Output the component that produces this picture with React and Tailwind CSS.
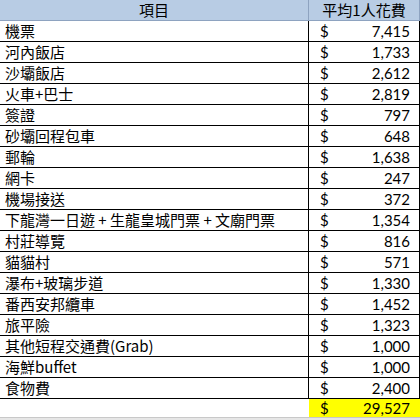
import React from "react";

const rows = [
  ["機票", "7,415"],
  ["河內飯店", "1,733"],
  ["沙壩飯店", "2,612"],
  ["火車+巴士", "2,819"],
  ["簽證", "797"],
  ["砂壩回程包車", "648"],
  ["郵輪", "1,638"],
  ["網卡", "247"],
  ["機場接送", "372"],
  ["下龍灣一日遊 + 生龍皇城門票 + 文廟門票", "1,354"],
  ["村莊導覽", "816"],
  ["貓貓村", "571"],
  ["瀑布+玻璃步道", "1,330"],
  ["番西安邦纜車", "1,452"],
  ["旅平險", "1,323"],
  ["其他短程交通費(Grab)", "1,000"],
  ["海鮮buffet", "1,000"],
  ["食物費", "2,400"],
];

export default function App() {
  return (
    <div className="w-[420px] h-[420px] bg-white overflow-hidden text-black">
      <div className="grid grid-cols-[309px_111px]">
        <div className="h-[21px] bg-[#b8cce4] border-b border-r border-[#8ea3c0] flex items-center justify-center text-[15px] leading-[20px] font-['Noto_Sans_CJK_TC','Noto_Sans',sans-serif]">
          項目
        </div>
        <div className="h-[21px] bg-[#b8cce4] border-b border-r border-[#8ea3c0] flex items-center justify-center text-[15px] leading-[20px] font-['Noto_Sans_CJK_TC','Noto_Sans',sans-serif]">
          平均1人花費
        </div>
        {rows.map(([name, value]) => (
          <React.Fragment key={name}>
            <div className="h-[21px] border-b border-r border-black flex items-center pl-[5px] text-[15px] leading-[20px] whitespace-nowrap font-['Noto_Sans_CJK_TC','Noto_Sans',sans-serif]">
              {name}
            </div>
            <div className="h-[21px] border-b border-r border-black flex items-center justify-between pl-[11px] pr-[9px] text-[15px] leading-[20px] font-['Lato','Liberation_Sans',sans-serif]">
              <span>$</span>
              <span>{value}</span>
            </div>
          </React.Fragment>
        ))}
        <div className="h-[19px] border-b border-[#c8c8c8] bg-white"></div>
        <div className="h-[19px] bg-[#ffff00] border-b border-[#c8c8c8] flex items-center justify-between pl-[11px] pr-[10px] text-[15px] leading-[18px] font-['Lato','Liberation_Sans',sans-serif]">
          <span>$</span>
          <span>29,527</span>
        </div>
      </div>
      <div className="h-[10px] bg-[#e6e6e6]"></div>
    </div>
  );
}
